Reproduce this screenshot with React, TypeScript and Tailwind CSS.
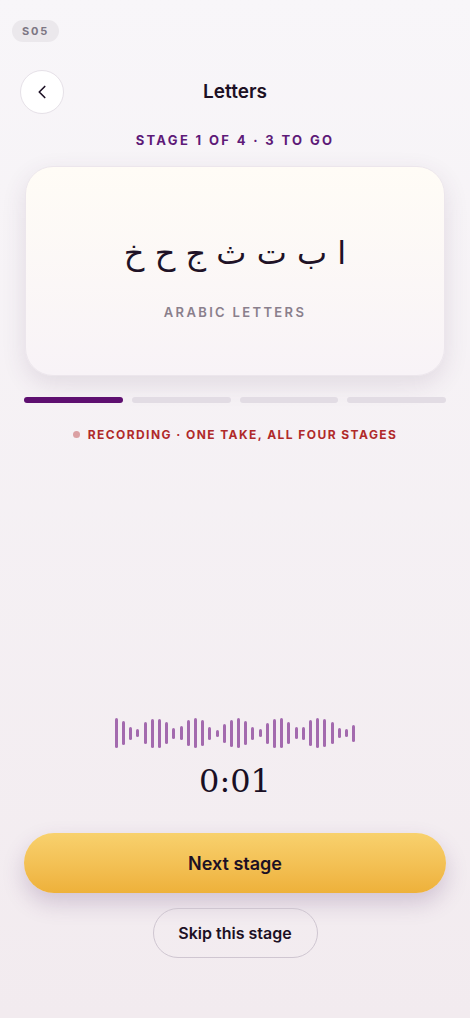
import { ChevronLeft } from 'lucide-react'

const BARS = [30, 24, 13, 8, 22, 29, 29, 22, 11, 14, 26, 30, 26, 13, 7, 19, 27, 30, 24, 13, 8, 21, 29, 30, 22, 12, 13, 26, 30, 28, 22, 10, 8, 17]

const STAGES = [true, false, false, false]

export default function App() {
  return (
    <div
      className="min-h-[1018px] w-full bg-gradient-to-b from-[#f8f6f9] to-[#f2ebef] flex flex-col"
      style={{ fontFamily: 'Inter, "Noto Sans", sans-serif' }}
    >
      {/* Screen tag */}
      <div className="px-3 pt-[17px]">
        <span className="inline-flex h-[22px] items-center rounded-full bg-[#ebe8ec] px-[10px] text-[11px] font-bold tracking-[0.16em] text-[#7d7683]">
          S05
        </span>
      </div>

      {/* Header */}
      <div className="relative mt-[28px] flex h-[44px] items-center justify-center">
        <button className="absolute left-5 top-0 flex h-[44px] w-[44px] items-center justify-center rounded-full border border-[#e6e1e8] bg-white">
          <ChevronLeft className="h-[22px] w-[22px] text-[#1c1024]" strokeWidth={1.8} />
        </button>
        <h1 className="text-[19px] font-semibold text-[#1c1024]">Letters</h1>
      </div>

      <p className="mt-[17px] text-center text-[13px] font-bold tracking-[0.18em] text-[#5e1a78]">
        STAGE 1 OF 4 · 3 TO GO
      </p>

      {/* Card */}
      <div className="mx-[25px] mt-[15px] flex h-[210px] flex-col items-center justify-center rounded-[28px] border border-[#ece6ec] bg-gradient-to-b from-[#fffcf6] to-[#f8f3f7] pt-[18px] shadow-[0_8px_24px_rgba(80,50,90,0.12)]">
        <p
          dir="rtl"
          className="text-[32px] leading-none text-[#1f1226]"
          style={{ fontFamily: '"DejaVu Sans", "Noto Sans", sans-serif' }}
        >
          ا ب ت ث ج ح خ
        </p>
        <p className="mt-[34px] text-[13px] font-semibold tracking-[0.18em] text-[#8a7f8c]">ARABIC LETTERS</p>
      </div>

      {/* Progress */}
      <div className="mx-6 mt-[21px] flex gap-[9px]">
        {STAGES.map((on, i) => (
          <div key={i} className={`h-[6px] flex-1 rounded-full ${on ? 'bg-[#5e0f70]' : 'bg-[#e2dce4]'}`} />
        ))}
      </div>

      <div className="mt-[23px] flex items-center justify-center gap-[8px]">
        <span className="h-[7px] w-[7px] rounded-full bg-[#dba0a3]" />
        <span className="text-[12px] font-bold tracking-[0.12em] text-[#b02a2a]">RECORDING · ONE TAKE, ALL FOUR STAGES</span>
      </div>

      <div className="flex-1" />

      {/* Waveform */}
      <div className="flex h-[32px] items-center justify-center gap-[4.2px]">
        {BARS.map((h, i) => (
          <div key={i} className="w-[3px] rounded-full bg-[#a36aae]" style={{ height: h }} />
        ))}
      </div>

      <p
        className="mt-[16px] text-center text-[32px] leading-none text-[#1a0f24]"
        style={{ fontFamily: '"DejaVu Serif", "Liberation Serif", serif' }}
      >
        0:01
      </p>

      {/* Actions */}
      <div className="mt-[36px] px-6">
        <button className="h-[60px] w-full rounded-full bg-gradient-to-b from-[#f8d16d] to-[#eeb13a] text-[18px] font-semibold text-[#1c1024] shadow-[0_10px_22px_rgba(90,50,110,0.22)]">
          Next stage
        </button>
      </div>

      <div className="mt-[15px] flex justify-center">
        <button className="h-[50px] w-[165px] rounded-full border border-[#cfc6d1] text-[16px] font-semibold text-[#1c1024]">
          Skip this stage
        </button>
      </div>

      <div className="h-[60px]" />
    </div>
  )
}
